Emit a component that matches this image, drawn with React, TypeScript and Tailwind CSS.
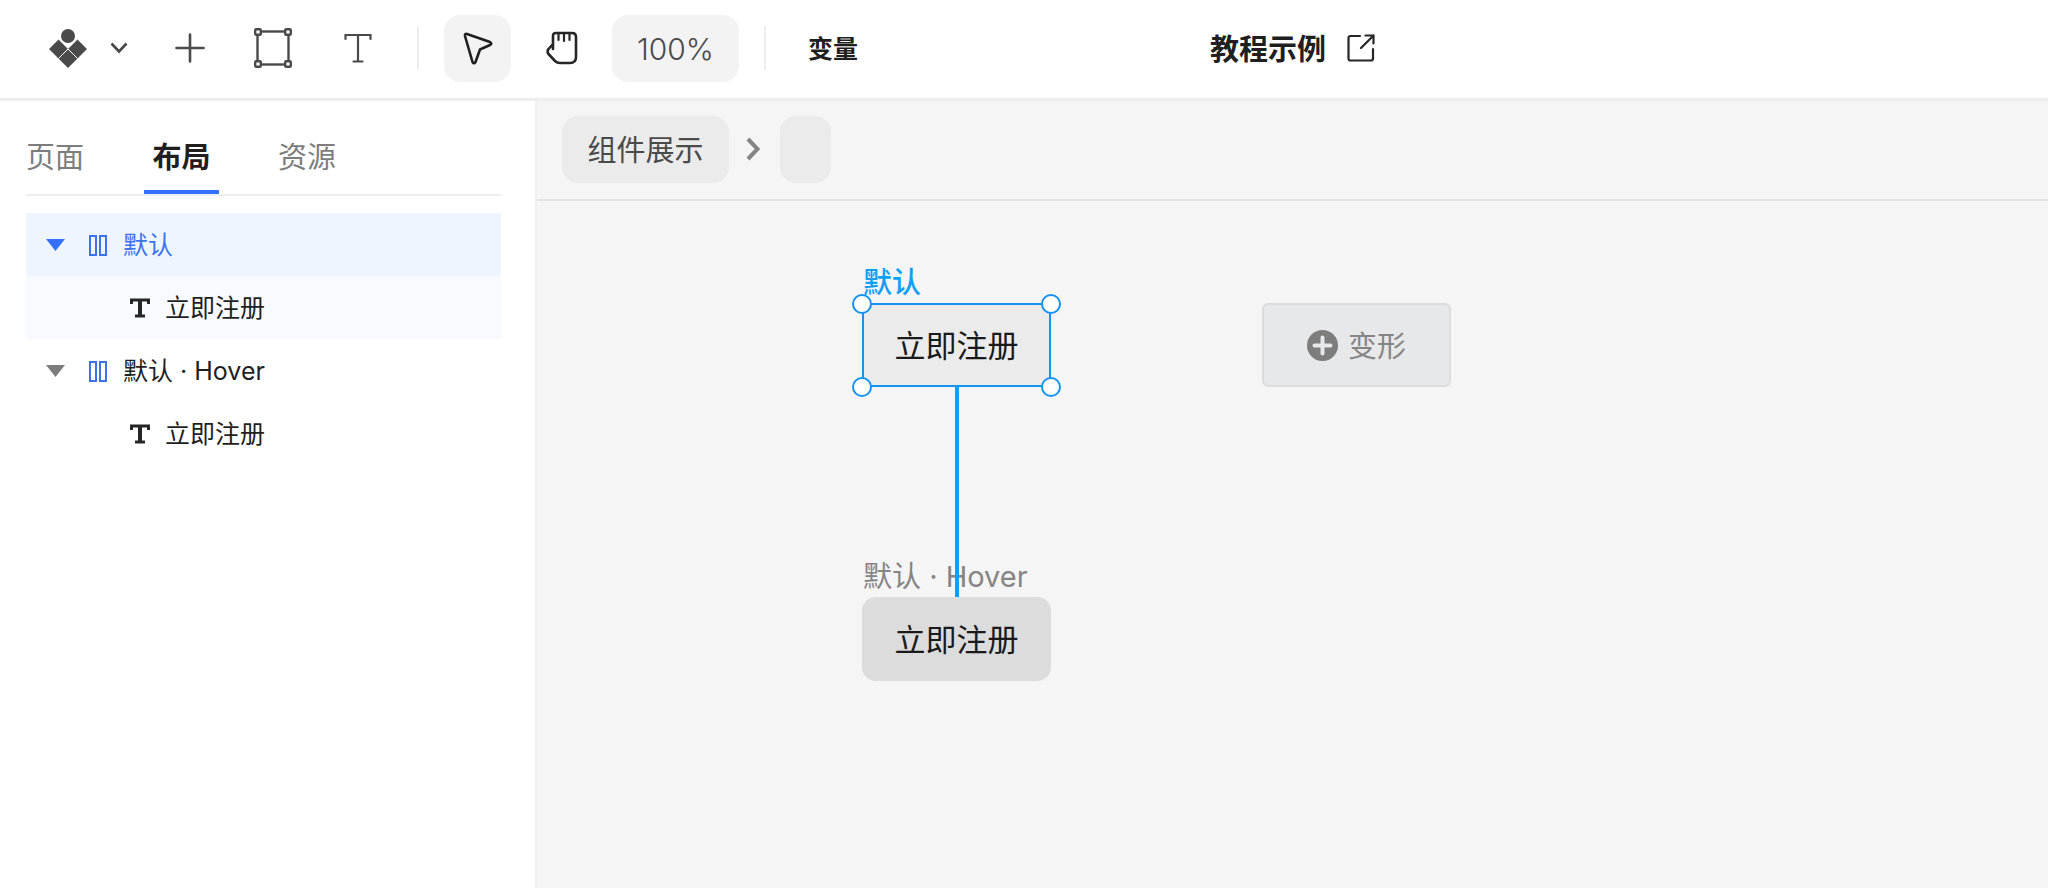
import React from 'react';

const fontStack = { fontFamily: 'Inter, "Noto Sans CJK SC", sans-serif' };

const Logo = () => (
  <svg width="40" height="41" viewBox="0 0 40 41" className="ml-[48px] shrink-0">
    <circle cx="20" cy="8" r="7" fill="#4a4a4a" />
    <path d="M1 21 L10.5 11.5 L20 21 L29.5 11.5 L39 21 L20 40 Z" fill="#4a4a4a" />
    <path d="M10.5 30.5 L20 21 L29.5 30.5" fill="none" stroke="#fff" strokeWidth="1" />
  </svg>
);

const FrameIcon = () => (
  <svg width="38" height="40" viewBox="0 0 38 40" fill="none" stroke="#4a4a4a" strokeWidth="2.4" className="ml-[49px] shrink-0">
    <rect x="3.5" y="3.5" width="31" height="33" />
    <rect x="1.2" y="1.2" width="5.6" height="5.6" rx="1" fill="#fff" />
    <rect x="31.2" y="1.2" width="5.6" height="5.6" rx="1" fill="#fff" />
    <rect x="1.2" y="33.2" width="5.6" height="5.6" rx="1" fill="#fff" />
    <rect x="31.2" y="33.2" width="5.6" height="5.6" rx="1" fill="#fff" />
  </svg>
);

const HandIcon = () => (
  <svg width="32" height="34" viewBox="0 0 32 34" fill="none" stroke="#262626" strokeWidth="2.6" strokeLinecap="round" strokeLinejoin="round" className="ml-[35px] shrink-0">
    <path d="M7 18 V5 Q7 2 10 2 H26 Q30 2 30 6 V26 Q30 32 24 32 H14 Q11 32 9 30 L2.5 23 Q0.5 20 3 17.5 L7 13" />
    <path d="M12.5 2 V9 M18 2 V10 M23.5 2 V9" strokeWidth="2.2" />
  </svg>
);

const Columns = () => (
  <svg width="18" height="21" viewBox="0 0 18 21" fill="none" stroke="#3b73ec" strokeWidth="2" className="shrink-0">
    <rect x="1" y="1" width="6" height="19" />
    <rect x="11" y="1" width="6" height="19" />
  </svg>
);

const SlabT = () => (
  <svg width="20" height="20" viewBox="0 0 20 20" fill="none" stroke="#262626" className="shrink-0">
    <path d="M1.5 6 V2 H18.5 V6" strokeWidth="3" />
    <path d="M10 2 V18" strokeWidth="4" />
    <path d="M5 18 H15" strokeWidth="3" />
  </svg>
);

const Caret = ({ color }: { color: string }) => (
  <svg width="19" height="12" viewBox="0 0 19 12" className="shrink-0">
    <path d="M0 0 H19 L9.5 12 Z" fill={color} />
  </svg>
);

const Handle = ({ className }: { className: string }) => (
  <div className={`absolute h-[20px] w-[20px] rounded-full border-2 border-[#1494f2] bg-white ${className}`} />
);

const Row = ({ bg, children }: { bg: string; children: React.ReactNode }) => (
  <div className={`flex h-[63px] items-center pt-[1px] text-[25px] ${bg}`}>{children}</div>
);

export default function App() {
  return (
    <div className="flex h-screen w-full flex-col overflow-hidden bg-white text-[#1f1f1f]" style={fontStack}>
      {/* toolbar */}
      <header className="flex h-[101px] shrink-0 items-center border-b-[3px] border-[#eeeeee] bg-white pb-[2px]">
        <Logo />
        <svg width="18" height="12" viewBox="0 0 18 12" fill="none" stroke="#4a4a4a" strokeWidth="2.6" className="ml-[22px] shrink-0">
          <path d="M1.5 1.5 L9 9.5 L16.5 1.5" />
        </svg>
        <svg width="30" height="30" viewBox="0 0 30 30" fill="none" stroke="#4a4a4a" strokeWidth="2.6" strokeLinecap="round" className="ml-[47px] shrink-0">
          <path d="M15 1.5 V28.5 M1.5 15 H28.5" />
        </svg>
        <FrameIcon />
        <svg width="28" height="30" viewBox="0 0 28 30" fill="none" stroke="#4a4a4a" strokeWidth="2.2" strokeLinecap="round" className="ml-[52px] shrink-0">
          <path d="M1.5 6 V2 H26.5 V6 M14 2 V28.5 M9.5 28.5 H18.5" />
        </svg>
        <div className="ml-[45px] h-[44px] w-[2px] bg-[#eeeeee]" />
        <div className="ml-[25px] flex h-[67px] w-[67px] items-center justify-center rounded-[16px] bg-[#f3f3f3]">
          <svg width="30" height="33" viewBox="0 0 30 33" fill="none" stroke="#1f1f1f" strokeWidth="2.6" strokeLinejoin="round">
            <path d="M2 4 Q1.5 1.5 4 2 L27 10 Q29.5 11.5 27 13 L17 17.5 L12.5 30 Q11 32.5 9.5 30 Z" />
          </svg>
        </div>
        <HandIcon />
        <div className="ml-[34px] flex h-[67px] w-[127px] items-center justify-center rounded-[16px] bg-[#f3f3f3] pt-[2px] text-[30px] font-light text-[#4a4a4a]">
          100%
        </div>
        <div className="ml-[25px] h-[44px] w-[2px] bg-[#eeeeee]" />
        <span className="ml-[42px] mt-[2px] text-[25px] font-semibold leading-none">变量</span>
        <span className="ml-[352px] mt-[2px] text-[29px] font-semibold leading-none">教程示例</span>
        <svg width="28" height="28" viewBox="0 0 28 28" fill="none" stroke="#262626" strokeWidth="2.2" strokeLinecap="round" className="ml-[21px] shrink-0">
          <path d="M13 2 H3.5 Q1.5 2 1.5 4 V24.5 Q1.5 26.5 3.5 26.5 H24 Q26 26.5 26 24.5 V15" />
          <path d="M14 14 L26.5 1.5 M18.5 1.5 H26.5 V9.5" />
        </svg>
      </header>

      <div className="flex min-h-0 flex-1">
        {/* layers panel */}
        <aside className="w-[537px] shrink-0 border-r-2 border-[#f0f0f0] bg-white px-[26px]">
          <div className="flex h-[95px] w-[475px] items-end border-b-2 border-[#eeeeee] text-[29px] text-[#7d7d7d]">
            <span className="h-[59px] w-[58px] leading-[45px]">页面</span>
            <span className="ml-[60px] h-[59px] w-[75px] border-b-4 border-[#3370ff] text-center font-semibold leading-[45px] text-[#1f1f1f]">布局</span>
            <span className="ml-[59px] h-[59px] leading-[45px]">资源</span>
          </div>
          <div className="mt-[17px] w-[475px]">
            <Row bg="bg-[#eff5ff]">
              <span className="ml-[20px]"><Caret color="#3370ff" /></span>
              <span className="ml-[24px]"><Columns /></span>
              <span className="ml-[16px] mt-[1px] text-[#3b73ec]">默认</span>
            </Row>
            <Row bg="bg-[#f7fbff]">
              <span className="ml-[104px]"><SlabT /></span>
              <span className="ml-[15px] mt-[1px]">立即注册</span>
            </Row>
            <Row bg="bg-white">
              <span className="ml-[20px]"><Caret color="#7d7d7d" /></span>
              <span className="ml-[24px]"><Columns /></span>
              <span className="ml-[16px] mt-[1px]">默认 · Hover</span>
            </Row>
            <Row bg="bg-white">
              <span className="ml-[104px]"><SlabT /></span>
              <span className="ml-[15px] mt-[1px]">立即注册</span>
            </Row>
          </div>
        </aside>

        <main className="flex min-w-0 flex-1 flex-col bg-[#f5f5f5]">
          {/* breadcrumb */}
          <div className="flex h-[100px] shrink-0 items-center border-b-2 border-[#e3e3e3] pb-[2px] pl-[25px]">
            <div className="flex h-[67px] w-[167px] items-center justify-center rounded-[16px] bg-[#ebebeb] pt-[3px] text-[29px] text-[#4a4a4a]">组件展示</div>
            <svg width="14" height="24" viewBox="0 0 14 24" fill="none" stroke="#858585" strokeWidth="4" className="ml-[17px] shrink-0">
              <path d="M2 2 L11.5 12 L2 22" />
            </svg>
            <div className="ml-[20px] h-[67px] w-[51px] rounded-[16px] bg-[#ebebeb]" />
          </div>

          {/* canvas */}
          <div className="relative flex-1">
            <span className="absolute left-[326px] top-[64px] text-[29px] font-medium leading-[36px] text-[#0ea0f5]">默认</span>
            <div className="absolute left-[325px] top-[102px] flex h-[84px] w-[189px] items-center justify-center border-2 border-[#1494f2] bg-[#ebebeb] pt-[3px] text-[31px] text-[#1a1a1a]">立即注册</div>
            <Handle className="left-[315px] top-[93px]" />
            <Handle className="left-[504px] top-[93px]" />
            <Handle className="left-[315px] top-[176px]" />
            <Handle className="left-[504px] top-[176px]" />
            <span className="absolute left-[326px] top-[358px] text-[29px] leading-[36px] text-[#858585]">默认 · Hover</span>
            <div className="absolute left-[418px] top-[186px] h-[211px] w-[4px] bg-[#0ea0f5]" />
            <div className="absolute left-[325px] top-[396px] flex h-[84px] w-[189px] items-center justify-center rounded-[14px] bg-[#dcdcdc] pt-[3px] text-[31px] text-[#1a1a1a]">立即注册</div>
            <div className="absolute left-[725px] top-[102px] flex h-[84px] w-[189px] items-center justify-center gap-[10px] rounded-[6px] border-2 border-[#dcdcdc] bg-[#e7e8e9] text-[29px] text-[#858585]">
              <svg width="31" height="31" viewBox="0 0 31 31" className="shrink-0">
                <circle cx="15.5" cy="15.5" r="15.5" fill="#7d7d7d" />
                <path d="M15.5 7.5 V23.5 M7.5 15.5 H23.5" stroke="#e7e8e9" strokeWidth="4" strokeLinecap="round" />
              </svg>
              <span className="mt-[3px]">变形</span>
            </div>
          </div>
        </main>
      </div>
    </div>
  );
}
